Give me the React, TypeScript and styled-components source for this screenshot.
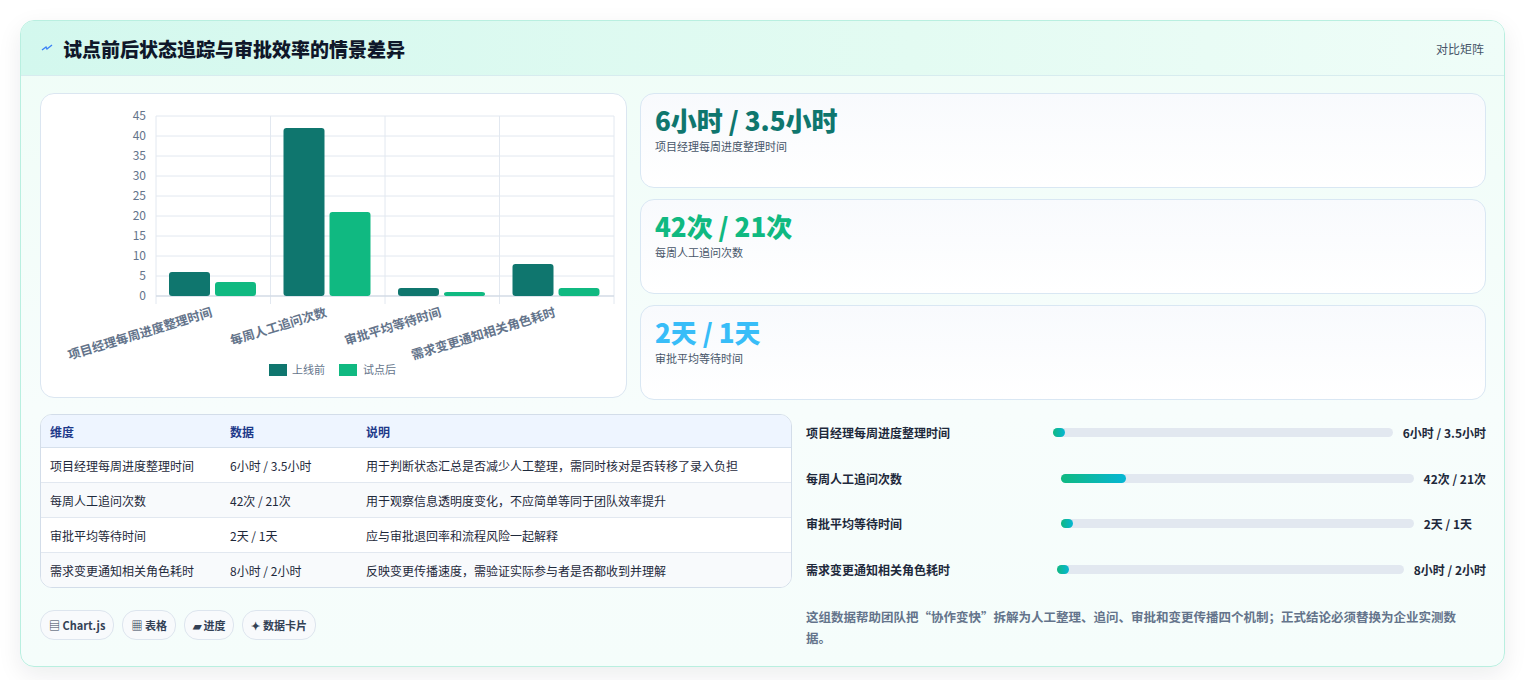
import React from "react";
import styled, { createGlobalStyle } from "styled-components";

const G = createGlobalStyle`
  body { margin: 0; background: #fff; font-family: "Noto Sans CJK SC", "Noto Sans", sans-serif; }
`;
const Page = styled.div`padding: 20px 20px 20px 20px; width: 1485px; box-sizing: content-box;`;
const Card = styled.div`
  border: 1px solid #b9efe0; border-radius: 14px; overflow: hidden;
  background: linear-gradient(180deg, #effdf7, #f7fdfc 60%, #f5fdfb);
  box-shadow: 0 8px 24px rgba(15,23,42,0.08);
`;
const Header = styled.div`
  height: 54px; display: flex; align-items: center; justify-content: space-between;
  padding: 0 20px; border-bottom: 1px solid #d7ecef;
  background: linear-gradient(90deg, #d3f8ee, #e3fbf2 60%, #effdf8);
`;
const Title = styled.h2`margin: 0; font-size: 19px; font-weight: 800; color: #0f172a; display: flex; align-items: center; gap: 10px;`;
const Tag = styled.span`font-size: 12px; color: #475569;`;
const Body = styled.div`padding: 17px 18px 18px 19px; display: flex; flex-direction: column; gap: 14px;`;
const TopGrid = styled.div`display: grid; grid-template-columns: 587px 1fr; gap: 13px;`;
const Panel = styled.div`background: #fff; border: 1px solid #dbe6f1; border-radius: 14px;`;
const ChartPanel = styled(Panel)`height: 305px; box-sizing: border-box; position: relative;`;
const Stats = styled.div`display: flex; flex-direction: column; gap: 11px;`;
const Stat = styled.div`
  height: 95px; box-sizing: border-box; border: 1px solid #d9e7f3; border-radius: 14px;
  background: linear-gradient(180deg, #f8fafd, #fff); padding: 9px 14px;
`;
const StatVal = styled.div<{ $c: string }>`font-size: 26px; font-weight: 800; color: ${p => p.$c}; line-height: 34px;`;
const StatLbl = styled.div`font-size: 11px; color: #475569; margin-top: 1px;`;
const BottomGrid = styled.div`display: grid; grid-template-columns: 752px 1fr; gap: 14px;`;
const Table = styled.table`
  width: 100%; border-collapse: separate; border-spacing: 0; border: 1px solid #d3dde9; border-radius: 12px;
  overflow: hidden; font-size: 12px; color: #1e293b; background: #fff;
`;
const Th = styled.th`text-align: left; font-weight: 700; color: #1e3a8a; background: #eef5ff; height: 32px; padding: 0 9px; border-bottom: 1px solid #d6e0ec;`;
const Td = styled.td<{ $alt?: boolean; $last?: boolean }>`
  height: 34px; padding: 0 9px; background: ${p => (p.$alt ? "#f8fafc" : "#fff")};
  border-bottom: ${p => (p.$last ? "none" : "1px solid #e2e8f0")};
`;
const Chips = styled.div`display: flex; gap: 8px; margin-top: 22px;`;
const Chip = styled.span`
  font-size: 11px; font-weight: 700; color: #334155; border: 1px solid #dde5ee; border-radius: 14px;
  background: #f8fafc; padding: 6px 8px;
`;
const Right = styled.div`display: flex; flex-direction: column; margin-top: -4px;`;
const BarRow = styled.div<{ $pr: number }>`height: 45.5px; display: flex; align-items: center; font-size: 12px; font-weight: 700; color: #1e293b; padding-right: ${p => p.$pr}px;`;
const BarLabel = styled.div<{ $w: number }>`width: ${p => p.$w}px; flex-shrink: 0;`;
const Track = styled.div`flex: 1; min-width: 0; height: 9px; border-radius: 5px; background: #e2e8f0; position: relative; margin-right: 10px;`;
const Fill = styled.div`position: absolute; left: 0; top: 0; bottom: 0; border-radius: 5px; background: linear-gradient(90deg, #10b981, #06b6d4);`;
const BarVal = styled.div`white-space: nowrap; flex-shrink: 0;`;
const Note = styled.p`margin: 14px 0 0 0; max-width: 672px; font-size: 12.5px; line-height: 21px; color: #64748b; font-weight: 600;`;

const data = [
  { n: "项目经理每周进度整理时间", d: "6小时 / 3.5小时", a: 6, b: 3.5, s: "用于判断状态汇总是否减少人工整理，需同时核对是否转移了录入负担" },
  { n: "每周人工追问次数", d: "42次 / 21次", a: 42, b: 21, s: "用于观察信息透明度变化，不应简单等同于团队效率提升" },
  { n: "审批平均等待时间", d: "2天 / 1天", a: 2, b: 1, s: "应与审批退回率和流程风险一起解释" },
  { n: "需求变更通知相关角色耗时", d: "8小时 / 2小时", a: 8, b: 2, s: "反映变更传播速度，需验证实际参与者是否都收到并理解" },
];

function Chart() {
  const x0 = 115, x1 = 573, y0 = 202, unit = 4;
  const cw = (x1 - x0) / 4;
  const ticks = [0, 5, 10, 15, 20, 25, 30, 35, 40, 45];
  return (
    <svg width="586" height="305" style={{ display: "block" }} fontFamily="'Noto Sans CJK SC', sans-serif">
      {ticks.map(t => (
        <g key={t}>
          <line x1={x0} x2={x1} y1={y0 - t * unit} y2={y0 - t * unit} stroke="#e2e8f0" />
          <text x={x0 - 10} y={y0 - t * unit + 4} fontSize="12" fill="#64748b" textAnchor="end">{t}</text>
        </g>
      ))}
      {[0, 1, 2, 3, 4].map(i => (
        <line key={i} x1={x0 + i * cw} x2={x0 + i * cw} y1={y0 - 180} y2={y0 + 8} stroke="#e2e8f0" />
      ))}
      <line x1={x0} x2={x1} y1={y0} y2={y0} stroke="#cbd5e1" />
      {data.map((d, i) => {
        const cx = x0 + i * cw;
        return (
          <g key={i}>
            <rect x={cx + 13} y={y0 - d.a * unit} width="41" height={d.a * unit} rx="3" fill="#0f766e" />
            <rect x={cx + 59} y={y0 - d.b * unit} width="41" height={d.b * unit} rx="3" fill="#10b981" />
            <text transform={`translate(${cx + 57},${y0 + 20}) rotate(-17)`} textAnchor="end" fontSize="12.5" fontWeight="700" fill="#64748b">{d.n}</text>
          </g>
        );
      })}
      <rect x="228" y="270" width="18" height="12" fill="#0f766e" />
      <text x="251" y="280" fontSize="11" fill="#64748b">上线前</text>
      <rect x="298" y="270" width="18" height="12" fill="#10b981" />
      <text x="322" y="280" fontSize="11" fill="#64748b">试点后</text>
    </svg>
  );
}

const bars = [
  { lw: 247, pr: 0, f: 12 },
  { lw: 255, pr: 0, f: 65 },
  { lw: 255, pr: 14, f: 12 },
  { lw: 251, pr: 0, f: 12 },
];

export default function App() {
  return (
    <Page>
      <G />
      <Card>
        <Header>
          <Title>
            <svg width="12" height="12" viewBox="0 0 12 12"><path d="M1 8 L5 5 L6 7 L11 3" stroke="#3b82f6" strokeWidth="1.4" fill="none" /></svg>
            试点前后状态追踪与审批效率的情景差异
          </Title>
          <Tag>对比矩阵</Tag>
        </Header>
        <Body>
          <TopGrid>
            <ChartPanel><Chart /></ChartPanel>
            <Stats>
              <Stat><StatVal $c="#0f766e">6小时 / 3.5小时</StatVal><StatLbl>项目经理每周进度整理时间</StatLbl></Stat>
              <Stat><StatVal $c="#10b981">42次 / 21次</StatVal><StatLbl>每周人工追问次数</StatLbl></Stat>
              <Stat><StatVal $c="#38bdf8">2天 / 1天</StatVal><StatLbl>审批平均等待时间</StatLbl></Stat>
            </Stats>
          </TopGrid>
          <BottomGrid>
            <div>
              <Table>
                <thead><tr><Th style={{ width: 162 }}>维度</Th><Th style={{ width: 118 }}>数据</Th><Th>说明</Th></tr></thead>
                <tbody>
                  {data.map((d, i) => (
                    <tr key={i}>
                      <Td $alt={i % 2 === 1} $last={i === 3}>{d.n}</Td>
                      <Td $alt={i % 2 === 1} $last={i === 3}>{d.d}</Td>
                      <Td $alt={i % 2 === 1} $last={i === 3}>{d.s}</Td>
                    </tr>
                  ))}
                </tbody>
              </Table>
              <Chips>
                <Chip>▤ Chart.js</Chip><Chip>▦ 表格</Chip><Chip>▰ 进度</Chip><Chip>✦ 数据卡片</Chip>
              </Chips>
            </div>
            <Right>
              {data.map((d, i) => (
                <BarRow key={i} $pr={bars[i].pr}>
                  <BarLabel $w={bars[i].lw}>{d.n}</BarLabel>
                  <Track><Fill style={{ width: bars[i].f }} /></Track>
                  <BarVal>{d.d}</BarVal>
                </BarRow>
              ))}
              <Note>这组数据帮助团队把“协作变快”拆解为人工整理、追问、审批和变更传播四个机制；正式结论必须替换为企业实测数据。</Note>
            </Right>
          </BottomGrid>
        </Body>
      </Card>
    </Page>
  );
}
